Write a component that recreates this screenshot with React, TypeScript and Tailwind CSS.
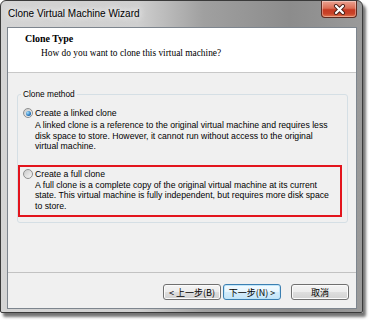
import React from 'react'

function Radio({ checked }: { checked?: boolean }) {
  return (
    <span className="flex h-[10px] w-[10px] shrink-0 items-center justify-center rounded-full border border-[#8e8f8f] bg-[linear-gradient(135deg,#c9c9c9,#f7f7f7)]">
      {checked && (
        <span className="h-[5px] w-[5px] rounded-full bg-[radial-gradient(circle_at_35%_35%,#a9e4ff,#1f6fb8_65%,#0e4684)]" />
      )}
    </span>
  )
}

function CloseButton() {
  return (
    <div className="flex h-[17px] w-[36px] items-center justify-center rounded-b-[4px] border border-t-0 border-[#5e2a20] bg-[linear-gradient(#eba392_0%,#dc6e55_45%,#c63a22_55%,#c9442a_80%,#e2774f_100%)] shadow-[inset_0_0_0_1px_rgba(255,255,255,0.35)]">
      <svg width="13" height="11" viewBox="0 0 13 11">
        <path d="M3 2 L10 9 M10 2 L3 9" stroke="#4a2018" strokeWidth="4" strokeLinecap="round" />
        <path d="M3 2 L10 9 M10 2 L3 9" stroke="#ffffff" strokeWidth="2.2" strokeLinecap="round" />
      </svg>
    </div>
  )
}

function Button({ children, primary }: { children: React.ReactNode; primary?: boolean }) {
  return (
    <div
      className={
        primary
          ? "flex h-[16px] w-[58px] items-center justify-center rounded-[3px] border border-[#3c7fb1] bg-[linear-gradient(#f4fbff_0%,#e6f5fd_50%,#d3ecfb_51%,#c4e5f8_100%)] text-[9px] leading-none shadow-[inset_0_0_0_1px_#bfe6fb] font-['Noto_Sans_CJK_TC','Liberation_Sans',sans-serif]"
          : "flex h-[16px] w-[58px] items-center justify-center rounded-[3px] border border-[#707070] bg-[linear-gradient(#f4f4f4_0%,#ececec_50%,#dedede_51%,#d2d2d2_100%)] text-[9px] leading-none shadow-[inset_0_0_0_1px_#fbfbfb] font-['Noto_Sans_CJK_TC','Liberation_Sans',sans-serif]"
      }
    >
      {children}
    </div>
  )
}

export default function App() {
  return (
    <div className="h-[322px] w-[369px] bg-white font-['Liberation_Sans',Arial,sans-serif] text-black">
      <div className="flex h-[313px] w-[363px] flex-col rounded-t-[6px] rounded-b-[2px] border border-[#3a3a3a] bg-[linear-gradient(to_right,#d4d4d4_0%,#cfcfcf_38%,#a0a0a0_56%,#8c8c8c_80%,#9a9a9a_100%)] pb-[3px] pl-[6px] pr-[5px] shadow-[3px_4px_3px_rgba(0,0,0,0.55)]">
        {/* title bar */}
        <div className="flex h-[26px] shrink-0 items-start justify-between">
          <div className="self-center pl-[1px] text-[10px] leading-none [text-shadow:0_0_6px_#ffffff,0_0_10px_#ffffff]">
            Clone Virtual Machine Wizard
          </div>
          <CloseButton />
        </div>

        {/* client area */}
        <div className="flex flex-1 flex-col border border-[#7d858e] bg-[#f0f0f0]">
          <div className="h-[45px] shrink-0 border-b border-[#c8c8c8] bg-white pl-[17px] pt-[5px] font-['Liberation_Serif',serif]">
            <div className="text-[10px] font-bold leading-[12px]">Clone Type</div>
            <div className="ml-[16px] mt-[2px] text-[9.4px] leading-[12px]">
              How do you want to clone this virtual machine?
            </div>
          </div>

          <div className="flex flex-1 flex-col pt-[16px] text-[8.7px]">
            <fieldset className="ml-[9px] mr-[8px] rounded-[3px] border border-[#d5dfe5] pb-[5px]">
              <legend className="ml-[3px] px-[2px] text-[8.3px] leading-[10px]">Clone method</legend>

              <div className="pl-[5px] pt-[8px]">
                <div className="flex items-center gap-[2px] leading-[12px]">
                  <Radio checked />
                  <span>Create a linked clone</span>
                </div>
                <p className="mt-[1px] whitespace-nowrap pl-[12px] leading-[10.5px]">
                  A linked clone is a reference to the original virtual machine and requires less
                  <br />
                  disk space to store. However, it cannot run without access to the original
                  <br />
                  virtual machine.
                </p>
              </div>

              <div className="mt-[13px] w-[324px] border-2 border-[#e3141c] pb-[4px] pl-[3px] pt-[1px]">
                <div className="flex items-center gap-[2px] leading-[12px]">
                  <Radio />
                  <span>Create a full clone</span>
                </div>
                <p className="whitespace-nowrap pl-[12px] leading-[10.5px]">
                  A full clone is a complete copy of the original virtual machine at its current
                  <br />
                  state. This virtual machine is fully independent, but requires more disk space
                  <br />
                  to store.
                </p>
              </div>
            </fieldset>

            <div className="mt-auto flex justify-end border-t border-[#c2c2c2] pb-[8px] pr-[7px] pt-[11px]">
              <div className="flex gap-[2px]">
                <Button>&lt; 上一步(B)</Button>
                <Button primary>下一步(N) &gt;</Button>
              </div>
              <div className="ml-[10px]">
                <Button>取消</Button>
              </div>
            </div>
          </div>
        </div>
      </div>
    </div>
  )
}
